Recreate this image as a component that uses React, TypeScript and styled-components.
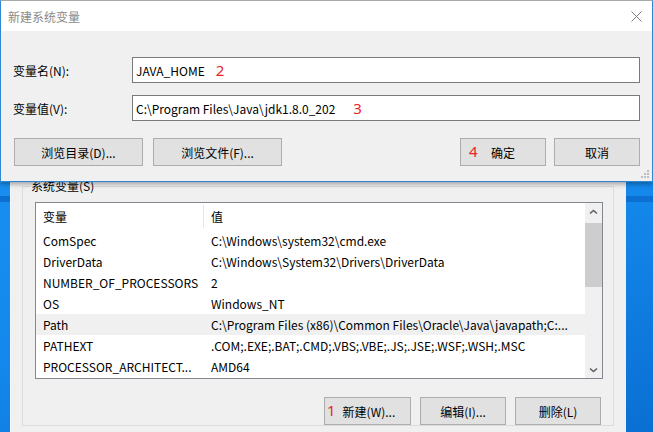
import React from "react";
import styled, { createGlobalStyle } from "styled-components";

interface IVariable {
  name: string;
  value: string;
  selected?: boolean;
}

const variables: IVariable[] = [
  { name: "ComSpec", value: "C:\\Windows\\system32\\cmd.exe" },
  { name: "DriverData", value: "C:\\Windows\\System32\\Drivers\\DriverData" },
  { name: "NUMBER_OF_PROCESSORS", value: "2" },
  { name: "OS", value: "Windows_NT" },
  {
    name: "Path",
    value: "C:\\Program Files (x86)\\Common Files\\Oracle\\Java\\javapath;C:...",
    selected: true,
  },
  { name: "PATHEXT", value: ".COM;.EXE;.BAT;.CMD;.VBS;.VBE;.JS;.JSE;.WSF;.WSH;.MSC" },
  { name: "PROCESSOR_ARCHITECT...", value: "AMD64" },
];

const GlobalStyle = createGlobalStyle`
  html, body {
    margin: 0;
    padding: 0;
    overflow: hidden;
  }
  body {
    font-family: "Noto Sans CJK SC", "Noto Sans", sans-serif;
    font-size: 12px;
    color: #000;
  }
  * {
    box-sizing: border-box;
  }
`;

const Desktop = styled.div`
  position: relative;
  width: 653px;
  height: 432px;
  overflow: hidden;
  background:
    linear-gradient(to bottom, transparent 196px, #0b70d2 196px, #0b70d2 202px, transparent 202px),
    linear-gradient(165deg, #1c96f4 0%, #1488ec 60%, #0a6fd3 100%);
`;

// ---- window behind (环境变量) ----
const BackWindow = styled.div`
  position: absolute;
  left: 10px;
  top: 169px;
  width: 616px;
  height: 280px;
  background: #f0f0f0;
  border-left: 1px solid #f7f7f7;
  padding-top: 10px;
`;

const Group = styled.fieldset`
  margin: 0 12px 0 11px;
  padding: 9px 10px 0 12px;
  border: 1px solid #dcdcdc;
  min-width: 0;
`;

const GroupLabel = styled.legend`
  padding: 0 1px;
  margin-left: -5px;
  line-height: 14px;
  color: #000;
`;

const ListBox = styled.div`
  display: grid;
  grid-template-columns: 1fr 17px;
  height: 177px;
  border: 1px solid #828790;
  background: #fff;
`;

const Table = styled.div`
  display: flex;
  flex-direction: column;
  min-width: 0;
`;

const HeaderRow = styled.div`
  display: grid;
  grid-template-columns: 168px 1fr;
  height: 27px;
  align-items: center;
`;

const HeaderCell = styled.div<{ $divider?: boolean }>`
  padding-left: 7px;
  height: 23px;
  line-height: 23px;
  border-right: ${(p) => (p.$divider ? "1px solid #e5e5e5" : "none")};
`;

const Row = styled.div<{ $selected?: boolean }>`
  display: grid;
  grid-template-columns: 168px 1fr;
  height: 21px;
  line-height: 21px;
  background: ${(p) => (p.$selected ? "#f0f0f0" : "transparent")};
`;

const Cell = styled.div`
  padding-left: 7px;
  white-space: nowrap;
  overflow: hidden;
`;

const ScrollBar = styled.div`
  display: flex;
  flex-direction: column;
  background: #f0f0f0;
`;

const ScrollArrow = styled.div`
  height: 17px;
  display: flex;
  align-items: center;
  justify-content: center;
`;

const ScrollTrack = styled.div`
  flex: 1;
  padding-top: 3px;
`;

const ScrollThumb = styled.div`
  height: 64px;
  background: #cdcdcd;
`;

const BottomButtons = styled.div`
  display: flex;
  justify-content: flex-end;
  gap: 9px;
  margin-top: 18px;
  padding-right: 2px;
`;

const Button = styled.div<{ $w: number; $start?: boolean }>`
  position: relative;
  width: ${(p) => p.$w}px;
  height: 28px;
  background: #e1e1e1;
  border: 1px solid #adadad;
  display: flex;
  align-items: center;
  justify-content: ${(p) => (p.$start ? "flex-start" : "center")};
  padding-left: ${(p) => (p.$start ? "2px" : "0")};
  white-space: nowrap;
`;

const Marker = styled.span`
  color: #ea2328;
  font-family: "Noto Sans", sans-serif;
  font-size: 15px;
  line-height: 1;
`;

const InlineMarker = styled(Marker)`
  margin-right: 7px;
  margin-top: -2px;
`;

const ButtonMarker = styled(Marker)`
  position: absolute;
  left: 8px;
  top: 5px;
`;

// ---- front dialog (新建系统变量) ----
const Dialog = styled.div`
  position: absolute;
  left: 0;
  top: 0;
  width: 653px;
  height: 182px;
  display: flex;
  flex-direction: column;
  background: #f0f0f0;
  border: 1px solid #2f86d3;
  border-top-color: #a9a9a9;
  box-shadow: 0 2px 5px rgba(0, 0, 0, 0.35);
`;

const TitleBar = styled.div`
  height: 30px;
  flex-shrink: 0;
  background: #fff;
  display: flex;
  align-items: center;
  justify-content: space-between;
  padding: 0 10px 0 7px;
`;

const Title = styled.span`
  color: #8a8a8a;
`;

const DialogBody = styled.div`
  position: relative;
  flex: 1;
  padding: 26px 12px 0 12px;
`;

const FormGrid = styled.div`
  display: grid;
  grid-template-columns: 119px 1fr;
  row-gap: 12px;
  align-items: center;
`;

const Label = styled.label``;

const TextBox = styled.div`
  height: 26px;
  background: #fff;
  border: 1px solid #7a7a7a;
  padding-left: 3px;
  display: flex;
  align-items: center;
  white-space: nowrap;
`;

const Value = styled.span<{ $gap: number }>`
  margin-right: ${(p) => p.$gap}px;
`;

const DialogButtons = styled.div`
  display: flex;
  justify-content: space-between;
  margin-top: 17px;
  padding: 0 0 0 1px;
`;

const ButtonGroup = styled.div<{ $gap: number }>`
  display: flex;
  gap: ${(p) => p.$gap}px;
`;

const Grip = styled.svg`
  position: absolute;
  right: 2px;
  bottom: 2px;
`;

function Chevron({ down }: { down?: boolean }) {
  return (
    <svg width="9" height="6" viewBox="0 0 9 6">
      <path
        d={down ? "M1 1.5 L4.5 4.5 L8 1.5" : "M1 4.5 L4.5 1.5 L8 4.5"}
        fill="none"
        stroke="#606060"
        strokeWidth="1.6"
      />
    </svg>
  );
}

export default function App() {
  return (
    <Desktop>
      <GlobalStyle />
      <BackWindow>
        <Group>
          <GroupLabel>系统变量(S)</GroupLabel>
          <ListBox>
            <Table>
              <HeaderRow>
                <HeaderCell $divider>变量</HeaderCell>
                <HeaderCell>值</HeaderCell>
              </HeaderRow>
              {variables.map((v) => (
                <Row key={v.name} $selected={v.selected}>
                  <Cell>{v.name}</Cell>
                  <Cell>{v.value}</Cell>
                </Row>
              ))}
            </Table>
            <ScrollBar>
              <ScrollArrow>
                <Chevron />
              </ScrollArrow>
              <ScrollTrack>
                <ScrollThumb />
              </ScrollTrack>
              <ScrollArrow>
                <Chevron down />
              </ScrollArrow>
            </ScrollBar>
          </ListBox>
          <BottomButtons>
            <Button $w={87} $start>
              <InlineMarker>1</InlineMarker>
              新建(W)...
            </Button>
            <Button $w={86}>编辑(I)...</Button>
            <Button $w={86}>删除(L)</Button>
          </BottomButtons>
        </Group>
      </BackWindow>

      <Dialog>
        <TitleBar>
          <Title>新建系统变量</Title>
          <svg width="11" height="11" viewBox="0 0 11 11">
            <path d="M0.5 0.5 L10.5 10.5 M10.5 0.5 L0.5 10.5" stroke="#7c7c7c" strokeWidth="1" />
          </svg>
        </TitleBar>
        <DialogBody>
          <FormGrid>
            <Label>变量名(N):</Label>
            <TextBox>
              <Value $gap={11}>JAVA_HOME</Value>
              <Marker>2</Marker>
            </TextBox>
            <Label>变量值(V):</Label>
            <TextBox>
              <Value $gap={18}>C:\Program Files\Java\jdk1.8.0_202</Value>
              <Marker>3</Marker>
            </TextBox>
          </FormGrid>
          <DialogButtons>
            <ButtonGroup $gap={10}>
              <Button $w={129}>浏览目录(D)...</Button>
              <Button $w={129}>浏览文件(F)...</Button>
            </ButtonGroup>
            <ButtonGroup $gap={8}>
              <Button $w={86}>
                <ButtonMarker>4</ButtonMarker>
                确定
              </Button>
              <Button $w={86}>取消</Button>
            </ButtonGroup>
          </DialogButtons>
          <Grip width="9" height="9" viewBox="0 0 9 9">
            {[
              [6, 0],
              [3, 3],
              [6, 3],
              [0, 6],
              [3, 6],
              [6, 6],
            ].map(([x, y]) => (
              <rect key={`${x}-${y}`} x={x} y={y} width="2" height="2" fill="#bdbdbd" />
            ))}
          </Grip>
        </DialogBody>
      </Dialog>
    </Desktop>
  );
}
